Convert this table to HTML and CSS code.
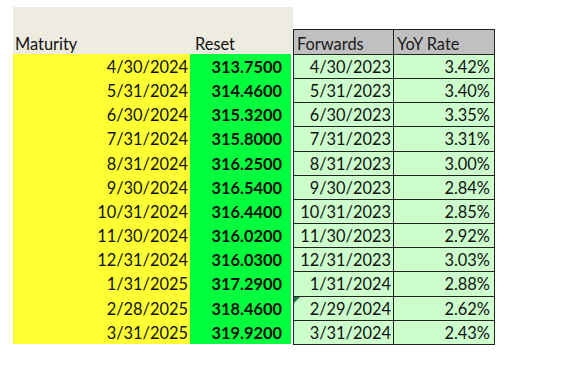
FILE: index.html
```
<!DOCTYPE html>
<html lang="en">
<head>
    <meta charset="UTF-8">
    <title>Reset Forwards</title>
    <link rel="stylesheet" href="styles.css">
</head>
<body>
    <div class="sheet">
        <!-- reset curve -->
        <div class="reset-block">
            <div class="reset-head">
                <span class="col-maturity">Maturity</span>
                <span class="col-reset">Reset</span>
            </div>
            <div class="reset-rows" id="resetRows"></div>
        </div>

        <!-- forwards table -->
        <div class="fwd-table" id="fwdTable">
            <div class="fwd-cell fwd-head">Forwards</div>
            <div class="fwd-cell fwd-head">YoY Rate</div>
        </div>
    </div>

    <script>
        const rows = [
            ['4/30/2024', '313.7500', '4/30/2023', '3.42%'],
            ['5/31/2024', '314.4600', '5/31/2023', '3.40%'],
            ['6/30/2024', '315.3200', '6/30/2023', '3.35%'],
            ['7/31/2024', '315.8000', '7/31/2023', '3.31%'],
            ['8/31/2024', '316.2500', '8/31/2023', '3.00%'],
            ['9/30/2024', '316.5400', '9/30/2023', '2.84%'],
            ['10/31/2024', '316.4400', '10/31/2023', '2.85%'],
            ['11/30/2024', '316.0200', '11/30/2023', '2.92%'],
            ['12/31/2024', '316.0300', '12/31/2023', '3.03%'],
            ['1/31/2025', '317.2900', '1/31/2024', '2.88%'],
            ['2/28/2025', '318.4600', '2/29/2024', '2.62%'],
            ['3/31/2025', '319.9200', '3/31/2024', '2.43%']
        ];

        const resetRows = document.getElementById('resetRows');
        const fwdTable = document.getElementById('fwdTable');

        rows.forEach(([maturity, reset, fwd, rate]) => {
            const row = document.createElement('div');
            row.className = 'reset-row';
            row.innerHTML = `<span class="cell-maturity">${maturity}</span><span class="cell-reset">${reset}</span><span class="cell-gap"></span>`;
            resetRows.appendChild(row);

            const fwdCell = document.createElement('div');
            fwdCell.className = 'fwd-cell fwd-date';
            fwdCell.textContent = fwd;
            // Excel's little error flag on the leap-day cell
            if (fwd === '2/29/2024') fwdCell.classList.add('flagged');
            fwdTable.appendChild(fwdCell);

            const rateCell = document.createElement('div');
            rateCell.className = 'fwd-cell fwd-rate';
            rateCell.textContent = rate;
            fwdTable.appendChild(rateCell);
        });
    </script>
</body>
</html>
```

FILE: styles.css
```
body {
    margin: 0;
    background: #ffffff;
    font-family: Lato, "Liberation Sans", sans-serif;
    font-size: 16.4px;
    color: #111;
}
.sheet {
    display: flex;
    align-items: flex-start;
    padding: 7px 0 0 13px;
}
.reset-block {
    width: 280px;
}
.reset-head {
    height: 47px;
    background-color: #eeece1;
    display: flex;
    align-items: flex-end;
    line-height: 20px;
    box-sizing: border-box;
}
.col-maturity {
    width: 177px;
    padding-left: 2px;
    box-sizing: border-box;
}
.col-reset {
    padding-left: 5px;
}
.reset-row {
    display: flex;
    height: 24.1667px;
    line-height: 25px;
}
.cell-maturity {
    width: 177px;
    background-color: #ffff33;
    text-align: right;
    padding-right: 2px;
    box-sizing: border-box;
}
.cell-reset {
    width: 101px;
    background-color: #00ff3c;
    text-align: right;
    padding-right: 9px;
    font-weight: bold;
    box-sizing: border-box;
}
.cell-gap {
    width: 2px;
}
.fwd-table {
    margin-top: 22px;
    display: grid;
    grid-template-columns: 100px 101px;
    grid-template-rows: 25px;
    grid-auto-rows: 24.1667px;
    border-top: 1px solid #222;
    border-left: 1px solid #222;
}
.fwd-cell {
    border-right: 1px solid #222;
    border-bottom: 1px solid #222;
    box-sizing: border-box;
    line-height: 24px;
    background-color: #ccffcc;
    position: relative;
}
.fwd-head {
    background-color: #c0c0c0;
    padding-left: 3px;
    line-height: 28px;
    color: #1a1a1a;
}
.fwd-date {
    text-align: right;
    padding-right: 2px;
}
.fwd-rate {
    text-align: right;
    padding-right: 4px;
}
.flagged::before {
    content: '';
    position: absolute;
    top: 0;
    left: 0;
    border-top: 6px solid #217346;
    border-right: 6px solid transparent;
}
```
